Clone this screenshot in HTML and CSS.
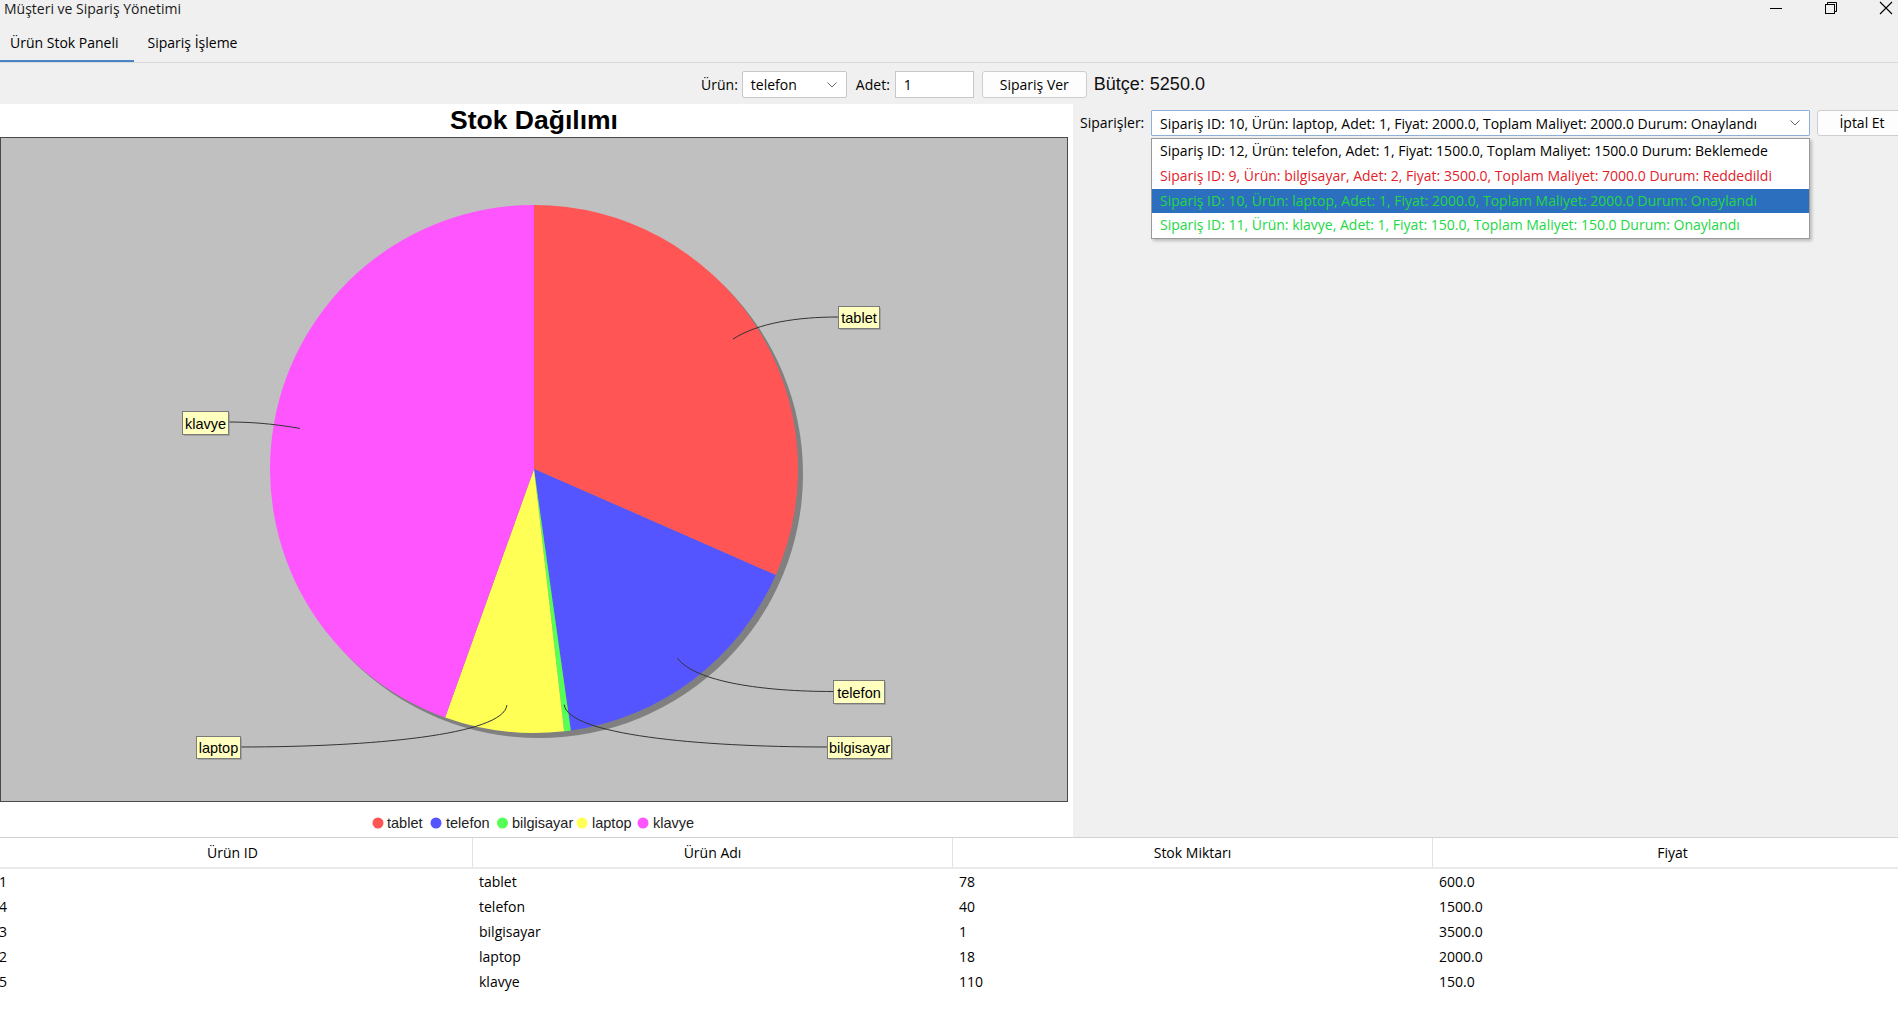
FILE: index.html
```html
<!DOCTYPE html>
<html lang="tr">
<head>
<meta charset="utf-8">
<title>Müşteri ve Sipariş Yönetimi</title>
<link rel="stylesheet" href="styles.css">
</head>
<body>
<div class="window">
  <div class="titlebar">
    <span class="title">Müşteri ve Sipariş Yönetimi</span>
    <div class="controls">
      <svg class="ctl" width="14" height="14" viewBox="0 0 14 14"><path d="M1 7.5H13" stroke="#000" stroke-width="1"/></svg>
      <svg class="ctl" width="14" height="14" viewBox="0 0 14 14"><rect x="1.5" y="3.5" width="9" height="9" fill="none" stroke="#000"/><path d="M3.5 3.5V1.5H12.5V10.5H10.5" fill="none" stroke="#000"/></svg>
      <svg class="ctl" width="14" height="14" viewBox="0 0 14 14"><path d="M1 1L13 13M13 1L1 13" stroke="#000" stroke-width="1.1"/></svg>
    </div>
  </div>

  <div class="tabs">
    <div class="tab active">Ürün Stok Paneli</div>
    <div class="tab">Sipariş İşleme</div>
  </div>

  <div class="toolbar">
    <span class="lbl lbl-product">Ürün:</span>
    <div class="combo combo-small">
      <span class="combo-text">telefon</span>
      <svg class="chev" width="10" height="6" viewBox="0 0 10 6"><path d="M0.5 0.5L5 5L9.5 0.5" fill="none" stroke="#666" stroke-width="1"/></svg>
    </div>
    <span class="lbl lbl-qty">Adet:</span>
    <div class="field">1</div>
    <div class="btn btn-order">Sipariş Ver</div>
    <span class="budget">Bütçe: 5250.0</span>
  </div>

  <div class="main">
    <div class="chart-panel">
      <svg class="chart" width="1073" height="733" viewBox="0 104 1073 733">
        <text class="chart-title" x="534" y="129" text-anchor="middle">Stok Dağılımı</text>
        <rect x="0.5" y="137.5" width="1067" height="664" fill="#c0c0c0" stroke="#4a4a4a" stroke-width="1"/>
        <circle cx="539" cy="474" r="264" fill="#808080"/>
        <path d="M534 469 L534 205 A264 264 0 0 1 775.77 575.04 Z" fill="#ff5555"/>
        <path d="M534 469 L775.77 575.04 A264 264 0 0 1 570.81 730.42 Z" fill="#5555ff"/>
        <path d="M534 469 L570.81 730.42 A264 264 0 0 1 564.15 731.27 Z" fill="#55ff55"/>
        <path d="M534 469 L564.15 731.27 A264 264 0 0 1 445.10 717.58 Z" fill="#ffff55"/>
        <path d="M534 469 L445.10 717.58 A264 264 0 0 1 534 205 Z" fill="#ff55ff"/>

        <g class="links">
          <path d="M733 339.1 C758.1 322.7 798 317 838 317"/>
          <path d="M299.9 428.4 C270.3 423.3 249 422 228 422"/>
          <path d="M677.5 658.3 C695.6 682.2 764 691.5 833 691.5"/>
          <path d="M564.2 704.7 C568 734.5 697 747 827 747"/>
          <path d="M506.9 705.1 C503.5 734.9 371.8 747 240 747"/>
        </g>

        <g class="plabel">
          <rect class="lshadow" x="840" y="308" width="41" height="22"/>
          <rect class="lbox" x="838.5" y="306.5" width="41" height="22"/>
          <text x="859" y="318">tablet</text>
        </g>
        <g class="plabel">
          <rect class="lshadow" x="184" y="413" width="46" height="23"/>
          <rect class="lbox" x="182.5" y="411.5" width="46" height="23"/>
          <text x="205.5" y="423.5">klavye</text>
        </g>
        <g class="plabel">
          <rect class="lshadow" x="835" y="682" width="51" height="23"/>
          <rect class="lbox" x="833.5" y="680.5" width="51" height="23"/>
          <text x="859" y="692.5">telefon</text>
        </g>
        <g class="plabel">
          <rect class="lshadow" x="829" y="738" width="64" height="22"/>
          <rect class="lbox" x="827.5" y="736.5" width="64" height="22"/>
          <text x="859.5" y="748">bilgisayar</text>
        </g>
        <g class="plabel">
          <rect class="lshadow" x="198" y="738" width="44" height="22"/>
          <rect class="lbox" x="196.5" y="736.5" width="44" height="22"/>
          <text x="218.5" y="748">laptop</text>
        </g>

        <g class="legend">
          <circle cx="378" cy="823" r="5.5" fill="#ff5555"/>
          <text x="387" y="823">tablet</text>
          <circle cx="436" cy="823" r="5.5" fill="#5555ff"/>
          <text x="446" y="823">telefon</text>
          <circle cx="502.5" cy="823" r="5.5" fill="#55ff55"/>
          <text x="512" y="823">bilgisayar</text>
          <circle cx="582" cy="823" r="5.5" fill="#ffff55"/>
          <text x="592" y="823">laptop</text>
          <circle cx="643" cy="823" r="5.5" fill="#ff55ff"/>
          <text x="653" y="823">klavye</text>
        </g>
      </svg>
    </div>

    <div class="orders">
      <div class="orders-row">
        <span class="lbl lbl-orders">Siparişler:</span>
        <div class="combo combo-big">
          <span class="combo-text">Sipariş ID: 10, Ürün: laptop, Adet: 1, Fiyat: 2000.0, Toplam Maliyet: 2000.0 Durum: Onaylandı</span>
          <svg class="chev" width="10" height="6" viewBox="0 0 10 6"><path d="M0.5 0.5L5 5L9.5 0.5" fill="none" stroke="#666" stroke-width="1"/></svg>
          <div class="popup">
            <div class="item">Sipariş ID: 12, Ürün: telefon, Adet: 1, Fiyat: 1500.0, Toplam Maliyet: 1500.0 Durum: Beklemede</div>
            <div class="item item-red">Sipariş ID: 9, Ürün: bilgisayar, Adet: 2, Fiyat: 3500.0, Toplam Maliyet: 7000.0 Durum: Reddedildi</div>
            <div class="item item-green item-selected">Sipariş ID: 10, Ürün: laptop, Adet: 1, Fiyat: 2000.0, Toplam Maliyet: 2000.0 Durum: Onaylandı</div>
            <div class="item item-green">Sipariş ID: 11, Ürün: klavye, Adet: 1, Fiyat: 150.0, Toplam Maliyet: 150.0 Durum: Onaylandı</div>
          </div>
        </div>
        <div class="btn btn-cancel">İptal Et</div>
      </div>
    </div>
  </div>

  <div class="table">
    <div class="table-inner">
      <div class="thead">
        <div class="th">Ürün ID</div>
        <div class="th">Ürün Adı</div>
        <div class="th">Stok Miktarı</div>
        <div class="th">Fiyat</div>
      </div>
      <div class="tr"><div class="td">1</div><div class="td">tablet</div><div class="td">78</div><div class="td">600.0</div></div>
      <div class="tr"><div class="td">4</div><div class="td">telefon</div><div class="td">40</div><div class="td">1500.0</div></div>
      <div class="tr"><div class="td">3</div><div class="td">bilgisayar</div><div class="td">1</div><div class="td">3500.0</div></div>
      <div class="tr"><div class="td">2</div><div class="td">laptop</div><div class="td">18</div><div class="td">2000.0</div></div>
      <div class="tr"><div class="td">5</div><div class="td">klavye</div><div class="td">110</div><div class="td">150.0</div></div>
    </div>
  </div>
</div>
</body>
</html>
```

FILE: styles.css
```css
* { box-sizing: border-box; }

html, body {
  margin: 0;
  padding: 0;
}

body {
  width: 1898px;
  height: 1022px;
  overflow: hidden;
  background: #f0f0f0;
  font-family: "Open Sans", "Noto Sans", sans-serif;
  font-size: 14px;
  color: #000;
}

.window {
  display: flex;
  flex-direction: column;
  height: 1022px;
}

/* title bar */
.titlebar {
  height: 24px;
  display: flex;
  justify-content: space-between;
  align-items: flex-start;
}

.title {
  padding-left: 4px;
  line-height: 18px;
  color: #1a1a1a;
}

.controls {
  display: flex;
  gap: 41px;
  padding-top: 1px;
  padding-right: 5px;
}

.ctl { display: block; }

/* tabs */
.tabs {
  height: 39px;
  display: flex;
  border-bottom: 1px solid #d9d9d9;
}

.tab {
  display: flex;
  align-items: center;
  padding: 0 15px 0 10px;
  border-bottom: 2px solid transparent;
}

.tab + .tab { padding-left: 14px; }

.tab.active { border-bottom-color: #4a84c5; }

/* toolbar */
.toolbar {
  height: 41px;
  padding: 8px 0 0 8px;
  display: flex;
  justify-content: center;
  align-items: flex-start;
}

.lbl {
  height: 27px;
  line-height: 27px;
  white-space: nowrap;
}

.lbl-product { margin-right: 4px; }
.lbl-qty { margin-right: 5px; }

.combo {
  position: relative;
  height: 27px;
  background: #fff;
  border: 1px solid #c8c8c8;
  border-radius: 2px;
  display: flex;
  align-items: center;
  justify-content: space-between;
  padding: 0 9px 0 8px;
}

.combo-small {
  width: 105px;
  margin-right: 9px;
}

.combo-text { white-space: nowrap; }

.chev { display: block; flex: none; }

.field {
  width: 79px;
  height: 27px;
  line-height: 25px;
  background: #fff;
  border: 1px solid #c8c8c8;
  padding-left: 8px;
  margin-right: 8px;
}

.btn {
  height: 27px;
  line-height: 25px;
  text-align: center;
  background: #fdfdfd;
  border: 1px solid #cdcdcd;
  border-radius: 3px;
  white-space: nowrap;
}

.btn-order {
  width: 105px;
  margin-right: 7px;
}

.budget {
  font-family: "Liberation Sans", Arial, sans-serif;
  font-size: 18px;
  line-height: 27px;
  color: #111;
}

/* main area */
.main {
  height: 733px;
  display: flex;
}

.chart-panel {
  width: 1073px;
  height: 733px;
  background: #fff;
  flex: none;
}

.chart { display: block; }

.chart-title {
  font-family: "Liberation Sans", Arial, sans-serif;
  font-weight: bold;
  font-size: 26.5px;
  fill: #000;
}

.links path {
  fill: none;
  stroke: #333;
  stroke-width: 1;
}

.lshadow { fill: #8c8c8c; opacity: 0.55; }

.lbox {
  fill: #ffffc0;
  stroke: #7a7a7a;
  stroke-width: 1;
}

.plabel text {
  font-family: "Liberation Sans", Arial, sans-serif;
  font-size: 14.5px;
  text-anchor: middle;
  dominant-baseline: central;
  fill: #000;
}

.legend text {
  font-family: "Liberation Sans", Arial, sans-serif;
  font-size: 14.5px;
  dominant-baseline: central;
  fill: #222;
}

.orders {
  flex: 1;
  padding: 6px 0 0 7px;
  overflow: visible;
}

.orders-row {
  display: flex;
  align-items: center;
  gap: 7px;
}

.lbl-orders {
  height: 26px;
  line-height: 26px;
  width: 64px;
}

.combo-big {
  width: 659px;
  height: 26px;
  border-color: #8fb0d6;
  border-radius: 1px;
  flex: none;
}

.popup {
  position: absolute;
  left: -1px;
  top: 27px;
  width: 659px;
  background: #fff;
  border: 1px solid #9a9a9a;
  box-shadow: 2px 2px 3px rgba(0, 0, 0, 0.22);
  z-index: 5;
}

.item {
  height: 24.75px;
  line-height: 24.75px;
  padding-left: 8px;
  white-space: nowrap;
}

.item-red { color: #e2222b; }
.item-green { color: #22d845; }
.item-selected { background: #2c6fbe; }

.btn-cancel {
  width: 90px;
  height: 26px;
  line-height: 24px;
  flex: none;
}

/* table */
.table {
  flex: 1;
  background: #fff;
  border-top: 1px solid #d2d2d2;
  overflow: hidden;
}

.table-inner {
  margin-left: -7px;
  width: 1920px;
}

.thead {
  display: grid;
  grid-template-columns: repeat(4, 480px);
  height: 31px;
  border-bottom: 2px solid #ebebeb;
}

.th {
  text-align: center;
  line-height: 29px;
  border-right: 1px solid #e3e3e3;
}

.tr {
  display: grid;
  grid-template-columns: repeat(4, 480px);
  height: 25px;
}

.td {
  line-height: 25px;
  padding-left: 6px;
  white-space: nowrap;
}
```
